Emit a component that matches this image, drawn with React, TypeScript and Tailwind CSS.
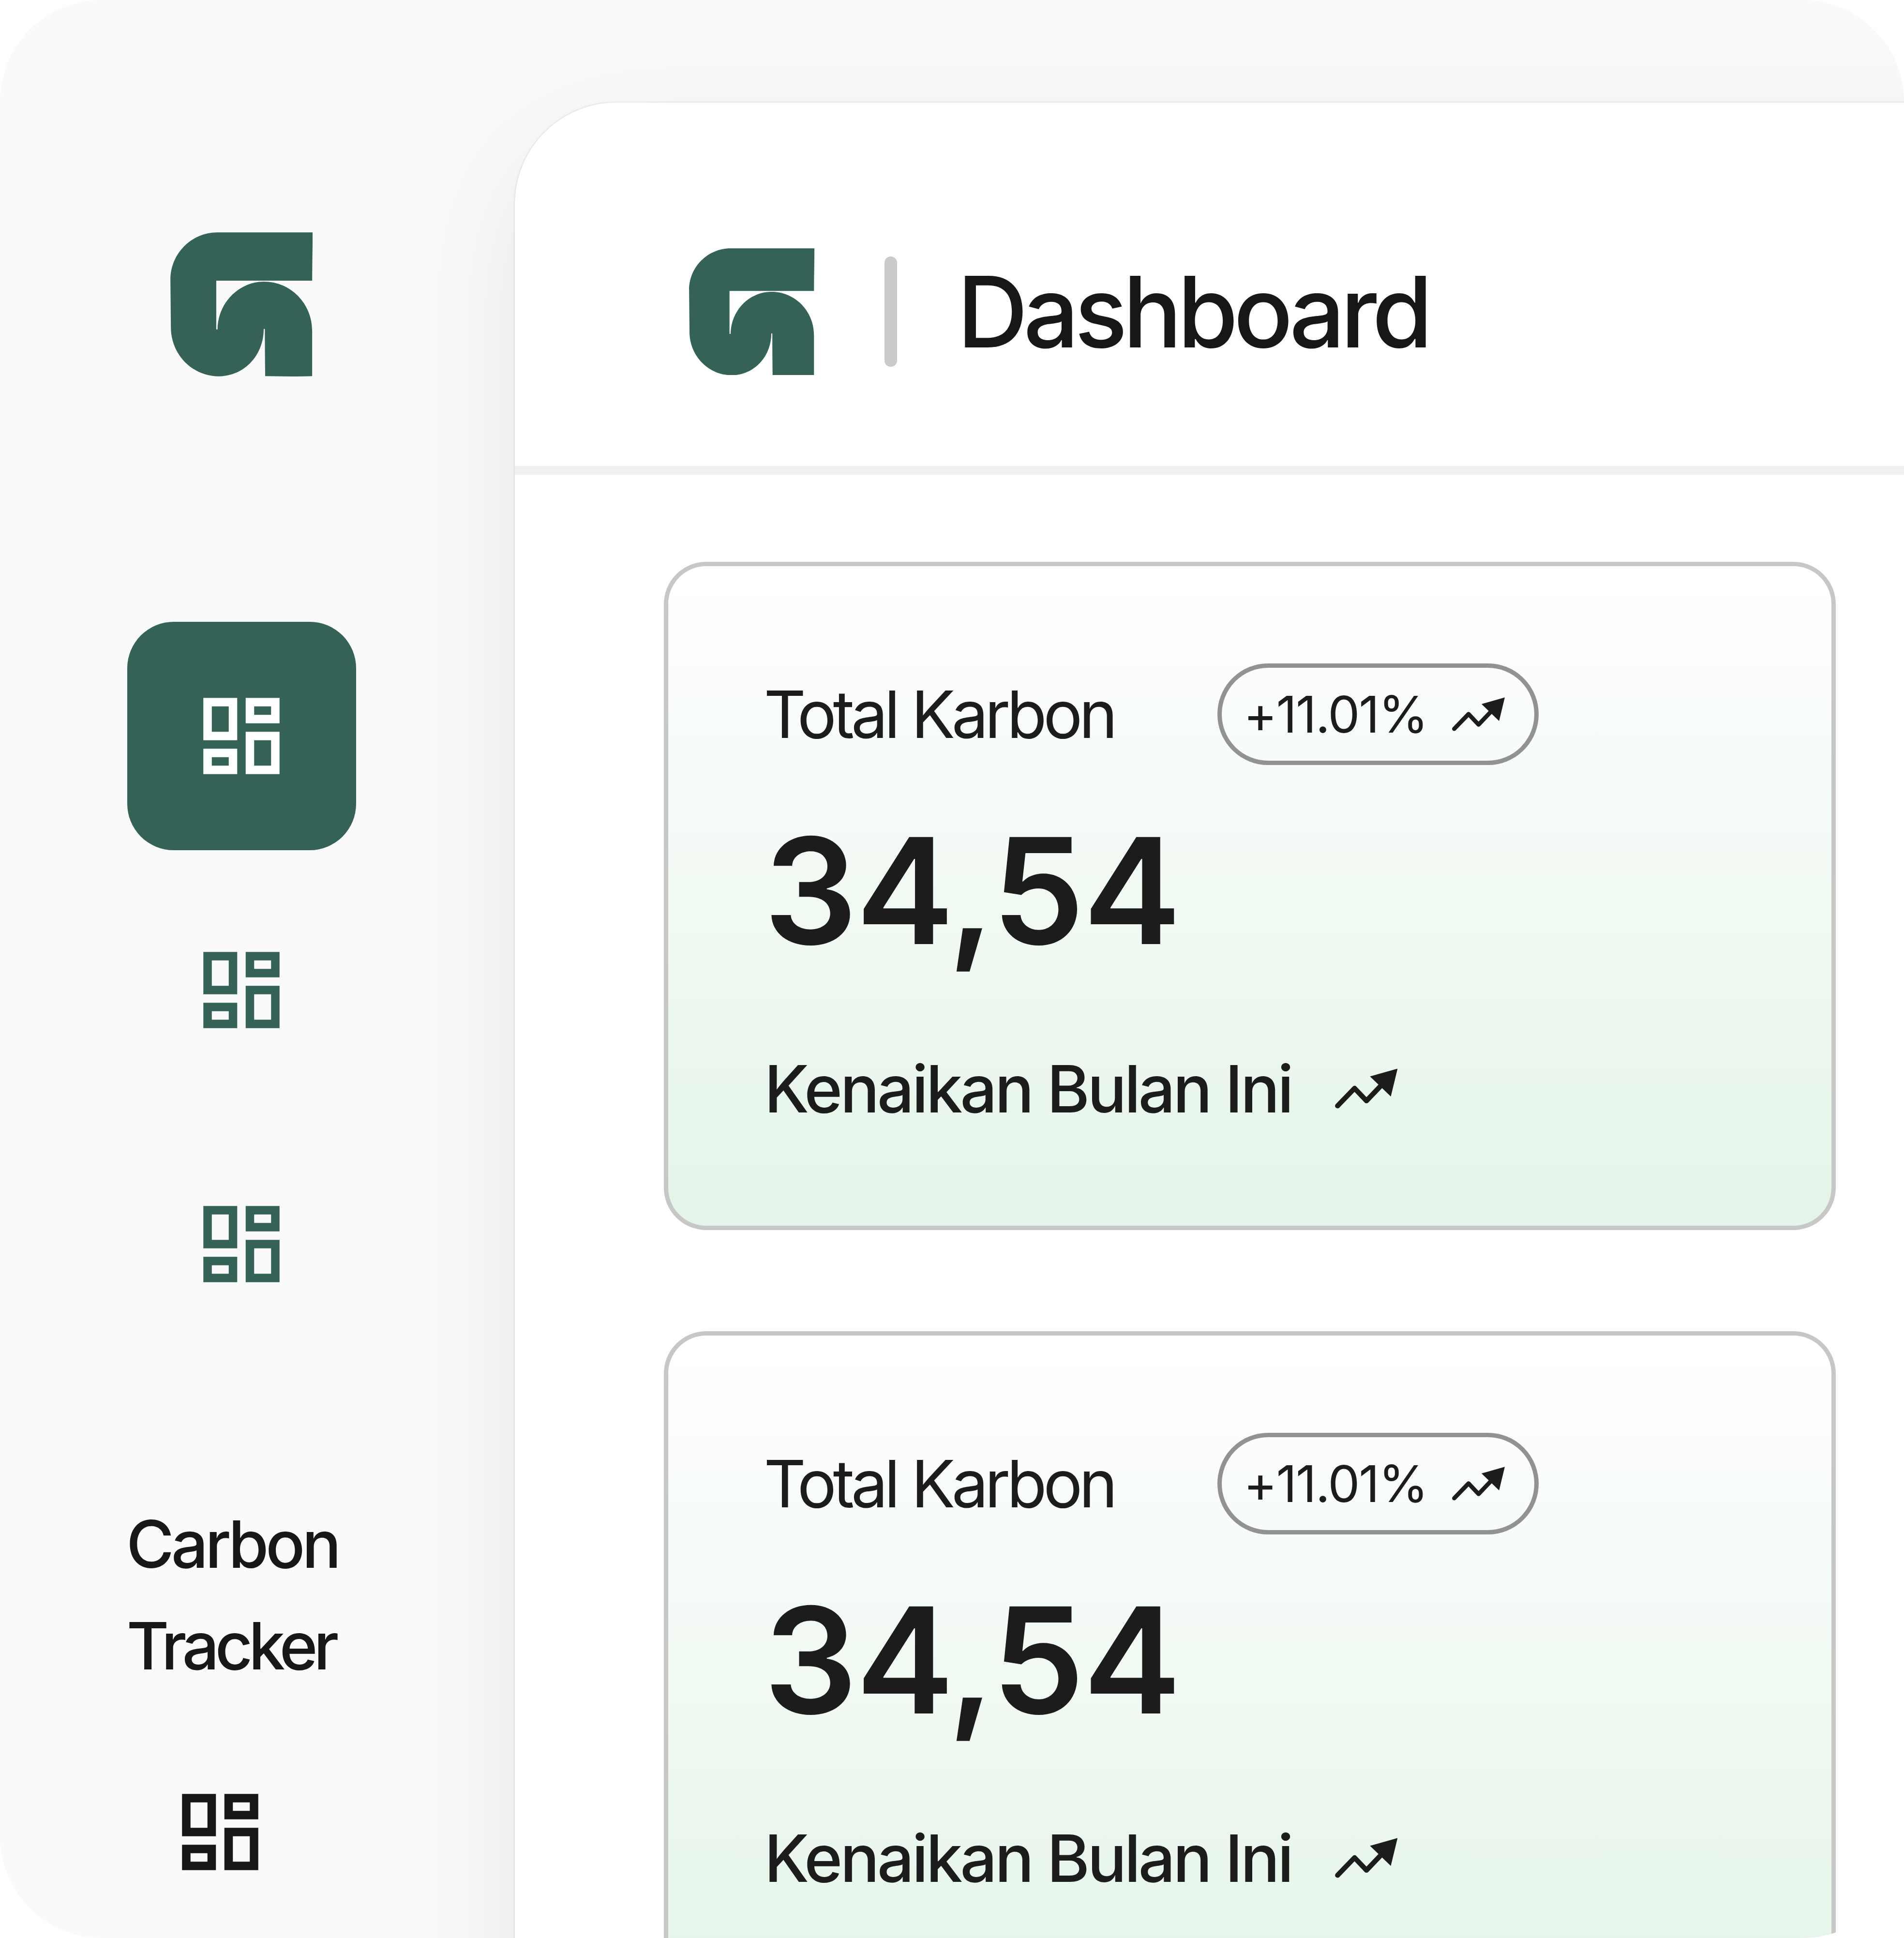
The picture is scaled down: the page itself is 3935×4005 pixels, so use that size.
function Logo({ className }: { className: string }) {
  return (
    <svg viewBox="95.5 90.5 885 894.5" preserveAspectRatio="none" className={className} fill="currentColor">
      <path d="M387 91H980C980 190 977 290 977 391H381V693H389C390 530 520 397 677 397C845 397 977 535 977 700V982Q977 984 850 985L685 983C684 885 683 790 683 690H676C675 860 550 984 395 984C235 984 99 850 99 680L96 385C96 220 230 91 387 91Z" />
    </svg>
  );
}

function GridIcon({ className }: { className: string }) {
  return (
    <svg viewBox="0 0 24 24" className={className} fill="currentColor" fillRule="evenodd">
      <path d="M3 3H11V13H3ZM5 5V11H9V5ZM13 3H21V9H13ZM15 5V7H19V5ZM13 11H21V21H13ZM15 13V19H19V13ZM3 15H11V21H3ZM5 17V19H9V17Z" />
    </svg>
  );
}

function TrendIcon({ className }: { className: string }) {
  return (
    <svg viewBox="0 0 109 70" className={className}>
      <path
        d="M4.4 65.2L34 34.6L54.8 56.4L80 30"
        fill="none"
        stroke="currentColor"
        strokeWidth="8.75"
        strokeLinecap="round"
        strokeLinejoin="round"
      />
      <path d="M109 0.3L60.9 14L97.2 48.9Z" fill="currentColor" />
    </svg>
  );
}

function StatCard() {
  return (
    <section className="flex h-[1380.5px] w-[2422px] shrink-0 flex-col rounded-[87.5px] border-[9px] border-[#c7c7c7] bg-linear-to-b from-white to-[#e4f4e8] bg-origin-border pt-[200.5px] pl-[198px] text-[#1c1c1c]">
      <div className="flex h-[210px] items-center">
        <span className="mt-[2px] w-[937.5px] text-[135.4px] leading-none tracking-[-7.5px] whitespace-nowrap">
          Total Karbon
        </span>
        <div className="flex h-[210px] w-[663.5px] items-center gap-[50.5px] rounded-full border-[9px] border-[#929292] pl-[45px]">
          <span className="text-[105px] leading-none tracking-[-2.07px]">+11.01%</span>
          <TrendIcon className="h-[70px] w-[109px]" />
        </div>
      </div>
      <p className="mt-[107.5px] text-[304px] leading-none font-semibold tracking-[-2.7px]">34,54</p>
      <div className="mt-[189.5px] ml-[1px] flex items-center gap-[89.5px]">
        <span className="mt-px text-[135px] leading-none font-medium tracking-[-4.9px] whitespace-nowrap">
          Kenaikan Bulan Ini
        </span>
        <TrendIcon className="h-[83px] w-[129.5px]" />
      </div>
    </section>
  );
}

function Sidebar() {
  return (
    <aside className="flex w-[1064px] shrink-0 flex-col pt-[480.3px] pl-[263px] text-[#356256]">
      <div className="flex w-[472.5px] flex-col items-center">
        <Logo className="h-[298px] w-[294.3px]" />
        <div className="mt-[506.4px] flex size-[472.5px] items-center justify-center rounded-[96px] bg-[#356256] text-white">
          <GridIcon className="size-[210px]" />
        </div>
        <GridIcon className="mt-[183.4px] size-[210px]" />
        <GridIcon className="mt-[315px] size-[210px]" />
      </div>
      <div className="mt-[410.7px] text-[135px] leading-[210px] font-medium text-[#171717]">
        <p className="-ml-[2px] tracking-[-6.36px]">Carbon</p>
        <p className="-ml-[1.5px] tracking-[-8.6px]">Tracker</p>
      </div>
      <GridIcon className="mt-[174.3px] ml-[87.2px] size-[210px] shrink-0 text-[#171717]" />
    </aside>
  );
}

export default function App() {
  return (
    <div className="h-[4005px] w-[3935px] overflow-hidden bg-white font-['Inter',sans-serif]">
      <div className="flex h-full w-full overflow-hidden rounded-[210px] bg-[#fafafa]">
        <Sidebar />
        <main className="mt-[212.3px] flex h-[4400px] w-[3300px] shrink-0 flex-col rounded-tl-[210px] bg-white shadow-[0_0_4px_rgba(0,0,0,0.16),0_88px_350px_rgba(0,0,0,0.088)]">
          <header className="flex h-[768.7px] shrink-0 items-center border-b-[18px] border-[#f0f0f0] pt-[113px] pl-[360.3px]">
            <Logo className="h-[262.7px] w-[259.3px] text-[#356256]" />
            <div className="ml-[144.4px] h-[227.5px] w-[26.25px] rounded-full bg-[#cacaca]" />
            <h1 className="ml-[123.7px] text-[203px] leading-none font-medium tracking-[-9.43px] text-[#171717]">
              Dashboard
            </h1>
          </header>
          <div className="flex flex-col gap-[209.5px] pt-[180.3px] pl-[307.5px]">
            <StatCard />
            <StatCard />
          </div>
        </main>
      </div>
    </div>
  );
}
